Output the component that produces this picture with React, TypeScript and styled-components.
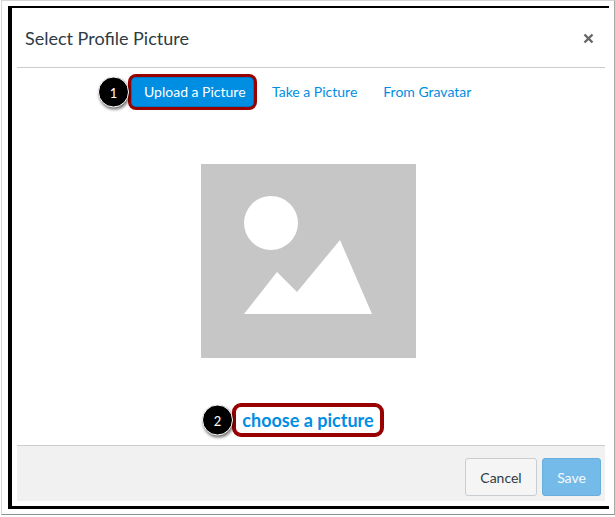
import React from 'react'
import styled, { createGlobalStyle } from 'styled-components'

const GlobalStyle = createGlobalStyle`
  html, body {
    margin: 0;
    padding: 0;
    background: #ffffff;
  }
  body {
    font-family: Lato, "Open Sans", sans-serif;
  }
`

const Shot = styled.div`
  box-sizing: border-box;
  width: 614px;
  height: 515px;
  margin-left: 1px;
  padding: 5px 4px 5px 6px;
  border: 1px solid #d6d6d6;
  border-right-color: #a8a8a8;
  border-bottom-color: #909090;
  box-shadow: 1px 1px 1px #c8c8c8;
`

const Frame = styled.div`
  box-sizing: border-box;
  width: 601px;
  height: 503px;
  border-left: 4px solid #000;
  border-top: 2px solid #000;
  border-bottom: 3px solid #000;
  padding: 0 4px 5px 5px;
  display: flex;
  flex-direction: column;
`

const Header = styled.header`
  height: 59px;
  flex: none;
  display: flex;
  align-items: center;
  justify-content: space-between;
  border-bottom: 1px solid #c7cdd1;
  box-sizing: content-box;
  padding-right: 11px;
  padding-left: 8px;
`

const Title = styled.h1`
  margin: 1px 0 0;
  font-size: 18px;
  font-weight: 400;
  color: #2d3b45;
`

const CloseIcon = styled.svg`
  width: 11px;
  height: 11px;
  display: block;
  margin-top: 1px;
`

const Tabs = styled.nav`
  flex: none;
  display: flex;
  align-items: center;
  height: 28px;
  margin-top: 10px;
  padding-left: 115px;
`

const TabButton = styled.a<{ $active?: boolean }>`
  position: relative;
  display: flex;
  align-items: center;
  height: 28px;
  box-sizing: border-box;
  font-size: 14px;
  white-space: nowrap;
  text-decoration: none;
  margin-right: ${p => (p.$active ? '19px' : '26px')};
  padding: ${p => (p.$active ? '0 0 2px 12px' : '0 0 2px')};
  width: ${p => (p.$active ? '121px' : 'auto')};
  color: ${p => (p.$active ? '#fff' : '#008ee2')};
  background: ${p => (p.$active ? '#008ee2' : 'transparent')};
  border-radius: 3px;
  ${p => p.$active && 'box-shadow: 0 0 0 1px #0078c4, 0 0 0 4px #990000; border-radius: 4px;'}
`

const Badge = styled.span`
  position: absolute;
  top: 50%;
  left: -3px;
  transform: translate(-100%, -50%);
  box-sizing: border-box;
  width: 31px;
  height: 31px;
  border-radius: 50%;
  background: #000;
  border: 1px solid #fff;
  box-shadow: 1px 2px 3px rgba(0, 0, 0, 0.55);
  color: #fff;
  font-size: 13px;
  font-weight: 400;
  display: flex;
  align-items: center;
  justify-content: center;
`

const Body = styled.main`
  flex: 1;
  display: flex;
  flex-direction: column;
  align-items: center;
  padding-right: 6px;
`

const Placeholder = styled.svg`
  display: block;
  width: 215px;
  height: 194px;
  margin-top: 58px;
`

const ChooseWrap = styled.div`
  margin-top: 45px;
  position: relative;
`

const ChooseLink = styled.a`
  position: relative;
  display: flex;
  align-items: center;
  justify-content: center;
  box-sizing: border-box;
  width: 152px;
  height: 34px;
  border: 4px solid #990000;
  border-radius: 9px;
  background: #fff;
  color: #008ee2;
  font-size: 18px;
  font-weight: 700;
  text-decoration: none;
`

const Footer = styled.footer`
  flex: none;
  height: 56px;
  display: flex;
  align-items: flex-start;
  justify-content: flex-end;
  gap: 5px;
  padding: 12px 4px 0 0;
  box-sizing: border-box;
  background: #f1f1f1;
  border-top: 1px solid #c7cdd1;
`

const FooterButton = styled.button<{ $primary?: boolean }>`
  box-sizing: border-box;
  height: 38px;
  width: ${p => (p.$primary ? '59px' : '72px')};
  padding: 0;
  font-family: inherit;
  font-size: 14px;
  border-radius: 3px;
  border: 1px solid ${p => (p.$primary ? '#6aaedb' : '#c7cdd1')};
  background: ${p => (p.$primary ? '#74bbe9' : '#f5f5f5')};
  color: ${p => (p.$primary ? '#f4fafe' : '#2d3b45')};
`

export default function App() {
  return (
    <>
      <GlobalStyle />
      <Shot>
        <Frame>
          <Header>
            <Title>Select Profile Picture</Title>
            <CloseIcon viewBox="0 0 11 11">
              <path d="M1.5 1.5 L9.5 9.5 M9.5 1.5 L1.5 9.5" stroke="#666" strokeWidth="2.4" fill="none" />
            </CloseIcon>
          </Header>
          <Tabs>
            <TabButton $active>
              <Badge>1</Badge>
              Upload a Picture
            </TabButton>
            <TabButton>Take a Picture</TabButton>
            <TabButton>From Gravatar</TabButton>
          </Tabs>
          <Body>
            <Placeholder viewBox="0 0 215 194">
              <rect width="215" height="194" fill="#c6c6c6" />
              <circle cx="70" cy="59" r="27" fill="#fff" />
              <path d="M43 150 L76 108 L96 128 L139 76 L171 150 Z" fill="#fff" />
            </Placeholder>
            <ChooseWrap>
              <ChooseLink>
                <Badge>2</Badge>
                choose a picture
              </ChooseLink>
            </ChooseWrap>
          </Body>
          <Footer>
            <FooterButton>Cancel</FooterButton>
            <FooterButton $primary>Save</FooterButton>
          </Footer>
        </Frame>
      </Shot>
    </>
  )
}
